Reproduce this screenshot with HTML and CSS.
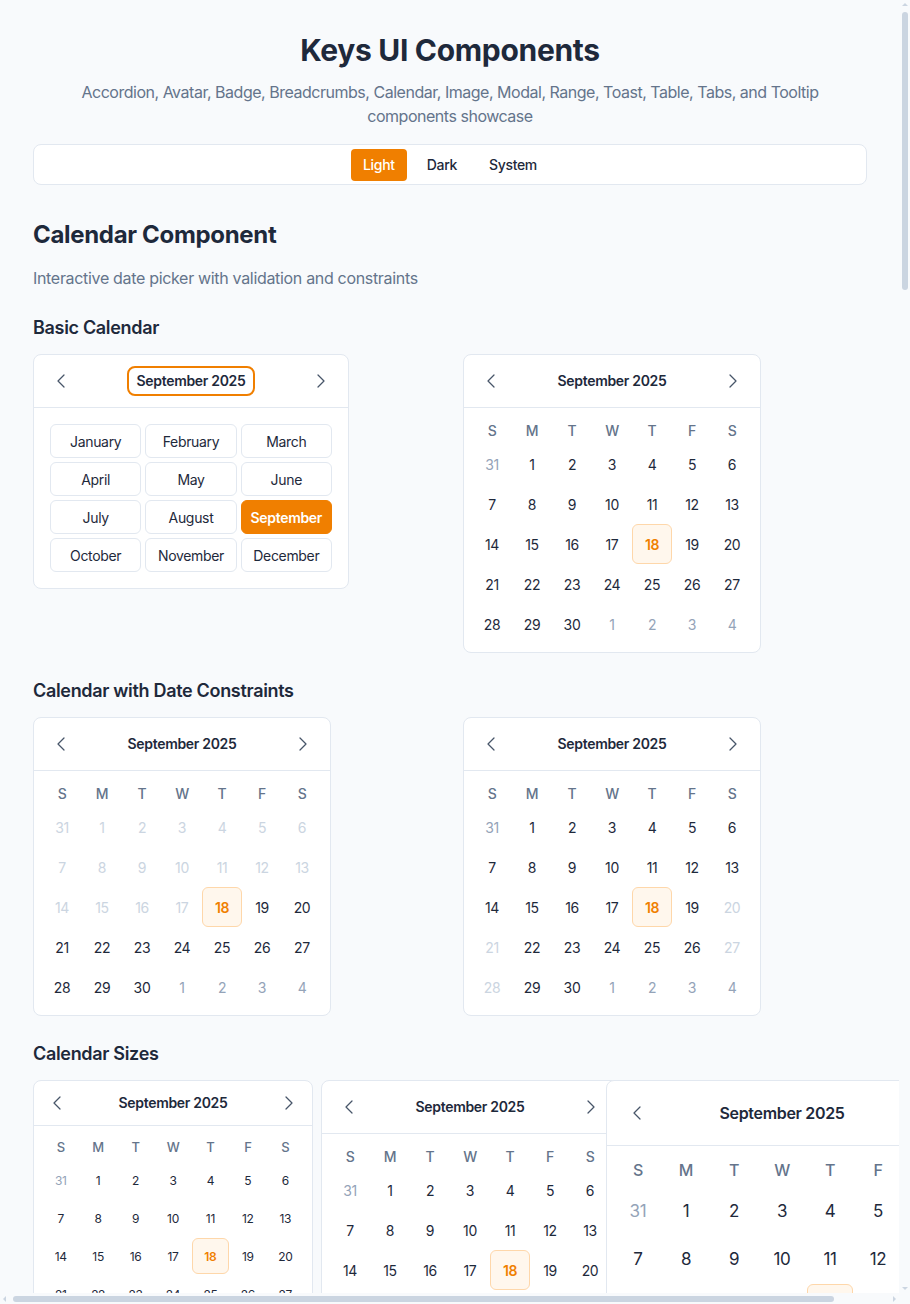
FILE: index.html
```html
<!DOCTYPE html>
<html lang="en">
<head>
<meta charset="utf-8">
<title>Keys UI Components</title>
<link rel="stylesheet" href="styles.css">
</head>
<body>
<main class="page">
  <header class="hero">
    <h1 class="title">Keys UI Components</h1>
    <p class="subtitle">Accordion, Avatar, Badge, Breadcrumbs, Calendar, Image, Modal, Range, Toast, Table, Tabs, and Tooltip components showcase</p>
  </header>

  <div class="theme-bar">
    <button class="theme-btn active">Light</button>
    <button class="theme-btn">Dark</button>
    <button class="theme-btn">System</button>
  </div>

  <section class="component">
    <h2 class="comp-title">Calendar Component</h2>
    <p class="comp-desc">Interactive date picker with validation and constraints</p>

    <div class="demo">
      <h3 class="demo-title">Basic Calendar</h3>
      <div class="pair">
        <div class="cal cal-months">
          <div class="cal-head">
            <button class="nav"><svg viewBox="0 0 16 16"><polyline points="10,2 4,8 10,14"/></svg></button>
            <button class="cal-title open">September 2025</button>
            <button class="nav"><svg viewBox="0 0 16 16"><polyline points="6,2 12,8 6,14"/></svg></button>
          </div>
          <div class="month-grid">
            <button class="mon">January</button><button class="mon">February</button><button class="mon">March</button>
            <button class="mon">April</button><button class="mon">May</button><button class="mon">June</button>
            <button class="mon">July</button><button class="mon">August</button><button class="mon sel">September</button>
            <button class="mon">October</button><button class="mon">November</button><button class="mon">December</button>
          </div>
        </div>

        <div class="cal">
          <div class="cal-head">
            <button class="nav"><svg viewBox="0 0 16 16"><polyline points="10,2 4,8 10,14"/></svg></button>
            <button class="cal-title">September 2025</button>
            <button class="nav"><svg viewBox="0 0 16 16"><polyline points="6,2 12,8 6,14"/></svg></button>
          </div>
          <div class="cal-body">
            <div class="weekdays"><span>S</span><span>M</span><span>T</span><span>W</span><span>T</span><span>F</span><span>S</span></div>
            <div class="days">
              <span class="d o">31</span><span class="d">1</span><span class="d">2</span><span class="d">3</span><span class="d">4</span><span class="d">5</span><span class="d">6</span>
              <span class="d">7</span><span class="d">8</span><span class="d">9</span><span class="d">10</span><span class="d">11</span><span class="d">12</span><span class="d">13</span>
              <span class="d">14</span><span class="d">15</span><span class="d">16</span><span class="d">17</span><span class="d sel">18</span><span class="d">19</span><span class="d">20</span>
              <span class="d">21</span><span class="d">22</span><span class="d">23</span><span class="d">24</span><span class="d">25</span><span class="d">26</span><span class="d">27</span>
              <span class="d">28</span><span class="d">29</span><span class="d">30</span><span class="d o">1</span><span class="d o">2</span><span class="d o">3</span><span class="d o">4</span>
            </div>
          </div>
        </div>
      </div>
    </div>

    <div class="demo">
      <h3 class="demo-title">Calendar with Date Constraints</h3>
      <div class="pair">
        <div class="cal">
          <div class="cal-head">
            <button class="nav"><svg viewBox="0 0 16 16"><polyline points="10,2 4,8 10,14"/></svg></button>
            <button class="cal-title">September 2025</button>
            <button class="nav"><svg viewBox="0 0 16 16"><polyline points="6,2 12,8 6,14"/></svg></button>
          </div>
          <div class="cal-body">
            <div class="weekdays"><span>S</span><span>M</span><span>T</span><span>W</span><span>T</span><span>F</span><span>S</span></div>
            <div class="days">
              <span class="d x">31</span><span class="d x">1</span><span class="d x">2</span><span class="d x">3</span><span class="d x">4</span><span class="d x">5</span><span class="d x">6</span>
              <span class="d x">7</span><span class="d x">8</span><span class="d x">9</span><span class="d x">10</span><span class="d x">11</span><span class="d x">12</span><span class="d x">13</span>
              <span class="d x">14</span><span class="d x">15</span><span class="d x">16</span><span class="d x">17</span><span class="d sel">18</span><span class="d">19</span><span class="d">20</span>
              <span class="d">21</span><span class="d">22</span><span class="d">23</span><span class="d">24</span><span class="d">25</span><span class="d">26</span><span class="d">27</span>
              <span class="d">28</span><span class="d">29</span><span class="d">30</span><span class="d o">1</span><span class="d o">2</span><span class="d o">3</span><span class="d o">4</span>
            </div>
          </div>
        </div>

        <div class="cal">
          <div class="cal-head">
            <button class="nav"><svg viewBox="0 0 16 16"><polyline points="10,2 4,8 10,14"/></svg></button>
            <button class="cal-title">September 2025</button>
            <button class="nav"><svg viewBox="0 0 16 16"><polyline points="6,2 12,8 6,14"/></svg></button>
          </div>
          <div class="cal-body">
            <div class="weekdays"><span>S</span><span>M</span><span>T</span><span>W</span><span>T</span><span>F</span><span>S</span></div>
            <div class="days">
              <span class="d o">31</span><span class="d">1</span><span class="d">2</span><span class="d">3</span><span class="d">4</span><span class="d">5</span><span class="d">6</span>
              <span class="d">7</span><span class="d">8</span><span class="d">9</span><span class="d">10</span><span class="d">11</span><span class="d">12</span><span class="d">13</span>
              <span class="d">14</span><span class="d">15</span><span class="d">16</span><span class="d">17</span><span class="d sel">18</span><span class="d">19</span><span class="d x">20</span>
              <span class="d x">21</span><span class="d">22</span><span class="d">23</span><span class="d">24</span><span class="d">25</span><span class="d">26</span><span class="d x">27</span>
              <span class="d x">28</span><span class="d">29</span><span class="d">30</span><span class="d o">1</span><span class="d o">2</span><span class="d o">3</span><span class="d o">4</span>
            </div>
          </div>
        </div>
      </div>
    </div>

    <div class="demo">
      <h3 class="demo-title">Calendar Sizes</h3>
      <div class="sizes">
        <div class="slot slot-sm">
          <div class="cal cal-sm">
            <div class="cal-head">
              <button class="nav"><svg viewBox="0 0 16 16"><polyline points="10,2 4,8 10,14"/></svg></button>
              <button class="cal-title">September 2025</button>
              <button class="nav"><svg viewBox="0 0 16 16"><polyline points="6,2 12,8 6,14"/></svg></button>
            </div>
            <div class="cal-body">
              <div class="weekdays"><span>S</span><span>M</span><span>T</span><span>W</span><span>T</span><span>F</span><span>S</span></div>
              <div class="days">
                <span class="d o">31</span><span class="d">1</span><span class="d">2</span><span class="d">3</span><span class="d">4</span><span class="d">5</span><span class="d">6</span>
                <span class="d">7</span><span class="d">8</span><span class="d">9</span><span class="d">10</span><span class="d">11</span><span class="d">12</span><span class="d">13</span>
                <span class="d">14</span><span class="d">15</span><span class="d">16</span><span class="d">17</span><span class="d sel">18</span><span class="d">19</span><span class="d">20</span>
                <span class="d">21</span><span class="d">22</span><span class="d">23</span><span class="d">24</span><span class="d">25</span><span class="d">26</span><span class="d">27</span>
                <span class="d">28</span><span class="d">29</span><span class="d">30</span><span class="d o">1</span><span class="d o">2</span><span class="d o">3</span><span class="d o">4</span>
              </div>
            </div>
          </div>
        </div>

        <div class="slot slot-md">
          <div class="cal">
            <div class="cal-head">
              <button class="nav"><svg viewBox="0 0 16 16"><polyline points="10,2 4,8 10,14"/></svg></button>
              <button class="cal-title">September 2025</button>
              <button class="nav"><svg viewBox="0 0 16 16"><polyline points="6,2 12,8 6,14"/></svg></button>
            </div>
            <div class="cal-body">
              <div class="weekdays"><span>S</span><span>M</span><span>T</span><span>W</span><span>T</span><span>F</span><span>S</span></div>
              <div class="days">
                <span class="d o">31</span><span class="d">1</span><span class="d">2</span><span class="d">3</span><span class="d">4</span><span class="d">5</span><span class="d">6</span>
                <span class="d">7</span><span class="d">8</span><span class="d">9</span><span class="d">10</span><span class="d">11</span><span class="d">12</span><span class="d">13</span>
                <span class="d">14</span><span class="d">15</span><span class="d">16</span><span class="d">17</span><span class="d sel">18</span><span class="d">19</span><span class="d">20</span>
                <span class="d">21</span><span class="d">22</span><span class="d">23</span><span class="d">24</span><span class="d">25</span><span class="d">26</span><span class="d">27</span>
                <span class="d">28</span><span class="d">29</span><span class="d">30</span><span class="d o">1</span><span class="d o">2</span><span class="d o">3</span><span class="d o">4</span>
              </div>
            </div>
          </div>
        </div>

        <div class="slot slot-lg">
          <div class="cal cal-lg">
            <div class="cal-head">
              <button class="nav"><svg viewBox="0 0 16 16"><polyline points="10,2 4,8 10,14"/></svg></button>
              <button class="cal-title">September 2025</button>
              <button class="nav"><svg viewBox="0 0 16 16"><polyline points="6,2 12,8 6,14"/></svg></button>
            </div>
            <div class="cal-body">
              <div class="weekdays"><span>S</span><span>M</span><span>T</span><span>W</span><span>T</span><span>F</span><span>S</span></div>
              <div class="days">
                <span class="d o">31</span><span class="d">1</span><span class="d">2</span><span class="d">3</span><span class="d">4</span><span class="d">5</span><span class="d">6</span>
                <span class="d">7</span><span class="d">8</span><span class="d">9</span><span class="d">10</span><span class="d">11</span><span class="d">12</span><span class="d">13</span>
                <span class="d">14</span><span class="d">15</span><span class="d">16</span><span class="d">17</span><span class="d sel">18</span><span class="d">19</span><span class="d">20</span>
                <span class="d">21</span><span class="d">22</span><span class="d">23</span><span class="d">24</span><span class="d">25</span><span class="d">26</span><span class="d">27</span>
                <span class="d">28</span><span class="d">29</span><span class="d">30</span><span class="d o">1</span><span class="d o">2</span><span class="d o">3</span><span class="d o">4</span>
              </div>
            </div>
          </div>
        </div>
      </div>
    </div>
  </section>
</main>

<div class="vscroll" aria-hidden="true"><span class="arrow up"></span><span class="thumb"></span><span class="arrow down"></span></div>
<div class="hscroll" aria-hidden="true"><span class="arrow left"></span><span class="thumb"></span><span class="arrow right"></span></div>
<div class="scroll-corner" aria-hidden="true"></div>
</body>
</html>
```

FILE: styles.css
```css
html {
  background: #f8fafc;
}

body {
  margin: 0;
  background: #f8fafc;
  color: #1e293b;
  font-family: Inter, "Noto Sans", "Liberation Sans", sans-serif;
  letter-spacing: -0.02em;
}

button {
  font-family: inherit;
  letter-spacing: inherit;
  cursor: pointer;
}

.page {
  width: 834px;
  padding: 32px 32px 0 33px;
  min-height: 5880px;
}

.hero {
  text-align: center;
}

.title {
  margin: 0;
  font-size: 30px;
  line-height: 36px;
  font-weight: 700;
  color: #1e293b;
}

.subtitle {
  margin: 12px auto 0;
  max-width: 800px;
  font-size: 16px;
  line-height: 24px;
  letter-spacing: -0.03em;
  color: #64748b;
}

.theme-bar {
  box-sizing: border-box;
  height: 41px;
  margin-top: 16px;
  display: flex;
  align-items: center;
  justify-content: center;
  gap: 8px;
  background: #fff;
  border: 1px solid #e2e8f0;
  border-radius: 8px;
}

.theme-btn {
  height: 32px;
  padding: 0 12px;
  border: 0;
  border-radius: 4px;
  background: transparent;
  font-size: 14px;
  font-weight: 500;
  color: #1e293b;
}

.theme-btn.active {
  background: #f07f00;
  color: #fff;
}

.comp-title {
  margin: 34px 0 0;
  font-size: 24px;
  line-height: 32px;
  font-weight: 700;
}

.comp-desc {
  margin: 15px 0 0;
  font-size: 16px;
  line-height: 24px;
  color: #64748b;
}

.demo {
  margin-top: 24px;
}

.demo-title {
  margin: 0 0 12px;
  font-size: 18px;
  line-height: 28px;
  font-weight: 600;
}

.pair {
  display: grid;
  grid-template-columns: 1fr 1fr;
  gap: 26px;
  align-items: start;
}

.cal {
  width: max-content;
  background: #fff;
  border: 1px solid #e2e8f0;
  border-radius: 8px;
}

.cal-head {
  display: flex;
  align-items: center;
  justify-content: space-between;
  padding: 11px 8px;
  border-bottom: 1px solid #e2e8f0;
}

.nav {
  width: 40px;
  height: 30px;
  display: flex;
  align-items: center;
  justify-content: center;
  padding: 0;
  border: 0;
  background: transparent;
}

.nav svg {
  width: 16px;
  height: 16px;
  fill: none;
  stroke: #475569;
  stroke-width: 1.25;
  stroke-linecap: round;
  stroke-linejoin: round;
}

.cal-title {
  padding: 2px 8px;
  border: 2px solid transparent;
  border-radius: 8px;
  background: transparent;
  font-size: 14px;
  line-height: 22px;
  font-weight: 600;
  color: #1e293b;
}

.cal-title.open {
  border-color: #f07f00;
}

.cal-body {
  padding: 8px;
}

.weekdays,
.days {
  display: grid;
  grid-template-columns: repeat(7, 40px);
}

.weekdays {
  height: 28px;
  align-items: center;
  justify-items: center;
  font-size: 14px;
  font-weight: 500;
  color: #64748b;
}

.days {
  grid-auto-rows: 40px;
}

.d {
  display: flex;
  align-items: center;
  justify-content: center;
  border: 1px solid transparent;
  border-radius: 6px;
  font-size: 14px;
  color: #1e293b;
}

.d.o {
  color: #94a3b8;
}

.d.x {
  color: #cbd5e1;
}

.d.sel {
  background: #fff7ed;
  border-color: #fed7aa;
  color: #f07f00;
  font-weight: 600;
}

/* month picker */
.cal-months {
  width: 316px;
  box-sizing: border-box;
}

.month-grid {
  display: grid;
  grid-template-columns: repeat(3, 1fr);
  gap: 4px;
  padding: 16px;
}

.mon {
  height: 34px;
  padding: 0;
  border: 1px solid #e2e8f0;
  border-radius: 6px;
  background: #fff;
  font-size: 14px;
  color: #1e293b;
}

.mon.sel {
  background: #f07f00;
  border-color: #f07f00;
  color: #fff;
  font-weight: 600;
}

/* sizes */
.sizes {
  display: flex;
  gap: 8px;
  align-items: flex-start;
}

.slot {
  flex: none;
}

.slot-md {
  flex: 0 0 277px;
  min-width: 0;
}

.cal-sm {
  width: 280px;
  box-sizing: border-box;
}

.cal-sm .cal-head {
  padding: 8px;
}

.cal-sm .nav {
  width: 32px;
  height: 28px;
}

.cal-sm .cal-title {
  line-height: 20px;
}

.cal-sm .weekdays,
.cal-sm .days {
  grid-template-columns: repeat(7, 1fr);
}

.cal-sm .weekdays {
  height: 26px;
  margin-bottom: 2px;
  font-size: 13px;
}

.cal-sm .days {
  grid-auto-rows: 36px;
  row-gap: 2px;
}

.cal-sm .d {
  font-size: 12px;
}

.cal-lg .cal-head {
  padding: 16px 8px;
}

.cal-lg .nav {
  width: 46px;
  height: 32px;
}

.cal-lg .cal-title {
  font-size: 16px;
  line-height: 24px;
}

.cal-lg .weekdays,
.cal-lg .days {
  grid-template-columns: repeat(7, 46px);
  column-gap: 2px;
}

.cal-lg .weekdays {
  height: 32px;
  margin-bottom: 2px;
  font-size: 16px;
}

.cal-lg .days {
  grid-auto-rows: 46px;
  row-gap: 2px;
}

.cal-lg .d {
  font-size: 17px;
}

/* window scrollbars (drawn, since the capture hides native ones) */
.vscroll,
.hscroll,
.scroll-corner {
  position: fixed;
  background: #f8fafc;
  z-index: 10;
}

.vscroll {
  top: 0;
  right: 0;
  bottom: 11px;
  width: 11px;
  display: flex;
  flex-direction: column;
  align-items: center;
}

.hscroll {
  left: 0;
  right: 11px;
  bottom: 0;
  height: 11px;
  display: flex;
  align-items: center;
}

.scroll-corner {
  right: 0;
  bottom: 0;
  width: 11px;
  height: 11px;
}

.thumb {
  background: #cbd5e1;
  border-radius: 3px;
}

.vscroll .thumb {
  width: 6px;
  height: 278px;
}

.hscroll .thumb {
  height: 6px;
  width: 821px;
  margin-left: 7px;
}

.arrow {
  width: 0;
  height: 0;
  border: 3px solid transparent;
}

.arrow.up {
  border-top-width: 0;
  border-bottom-color: #cbd5e1;
  margin: 3px 0 6px;
}

.arrow.down {
  border-bottom-width: 0;
  border-top-color: #cbd5e1;
  margin: auto 0 3px;
}

.arrow.left {
  border-left-width: 0;
  border-right-color: #cbd5e1;
  margin-left: 3px;
}

.arrow.right {
  border-right-width: 0;
  border-left-color: #cbd5e1;
  margin: 0 3px 0 auto;
}
```
